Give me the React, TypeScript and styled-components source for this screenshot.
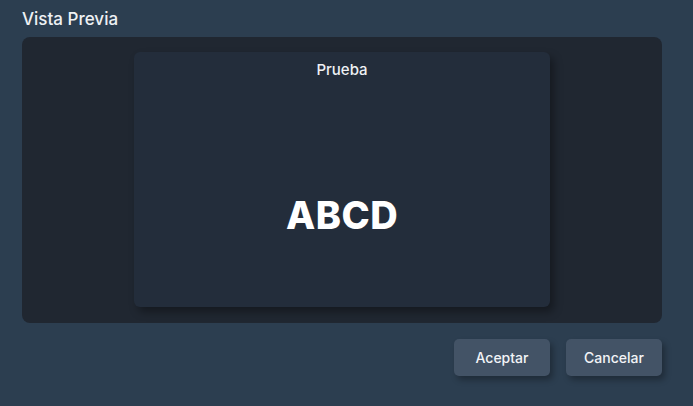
import React from 'react';
import styled, { createGlobalStyle } from 'styled-components';

const GlobalStyle = createGlobalStyle`
  html, body {
    margin: 0;
    padding: 0;
    background: #2c3e50;
  }
  body {
    font-family: Inter, "Noto Sans", "Liberation Sans", sans-serif;
  }
`;

const Window = styled.div`
  width: 693px;
  height: 406px;
  box-sizing: border-box;
  padding: 8px 31px 0 22px;
  background-color: #2c3e50;
  display: flex;
  flex-direction: column;
`;

const Title = styled.h2`
  margin: 0;
  height: 29px;
  font-size: 17px;
  font-weight: 500;
  color: #eef1f4;
  line-height: 22px;
`;

const PreviewArea = styled.div`
  height: 286px;
  box-sizing: border-box;
  background-color: #202731;
  border-radius: 8px;
  padding: 15px 0 16px;
  display: flex;
  justify-content: center;
`;

const PreviewCard = styled.div`
  width: 416px;
  background-color: #232d3b;
  border-radius: 6px;
  box-shadow: 4px 5px 8px rgba(0, 0, 0, 0.35);
  display: flex;
  flex-direction: column;
  align-items: center;
`;

const CardTitle = styled.div`
  margin-top: 8px;
  font-size: 15px;
  font-weight: 500;
  color: #eef1f4;
  line-height: 20px;
`;

const CardBody = styled.div`
  flex: 1;
  display: flex;
  align-items: center;
  justify-content: center;
  padding-top: 42px;
`;

const BigText = styled.div`
  font-size: 38px;
  font-weight: 800;
  color: #ffffff;
  letter-spacing: 0.5px;
`;

const Footer = styled.div`
  display: flex;
  justify-content: flex-end;
  gap: 16px;
  margin-top: 16px;
`;

const Button = styled.button`
  width: 96px;
  height: 37px;
  border: none;
  border-radius: 5px;
  background-color: #435366;
  color: #f2f4f7;
  font-family: inherit;
  font-size: 14px;
  font-weight: 500;
  box-shadow: 3px 4px 6px rgba(0, 0, 0, 0.3);
  cursor: pointer;
  &:hover {
    background-color: #4c5d72;
  }
`;

const App: React.FC = () => {
  return (
    <>
      <GlobalStyle />
      <Window>
        <Title>Vista Previa</Title>
        <PreviewArea>
          <PreviewCard>
            <CardTitle>Prueba</CardTitle>
            <CardBody>
              <BigText>ABCD</BigText>
            </CardBody>
          </PreviewCard>
        </PreviewArea>
        <Footer>
          <Button>Aceptar</Button>
          <Button>Cancelar</Button>
        </Footer>
      </Window>
    </>
  );
};

export default App;
